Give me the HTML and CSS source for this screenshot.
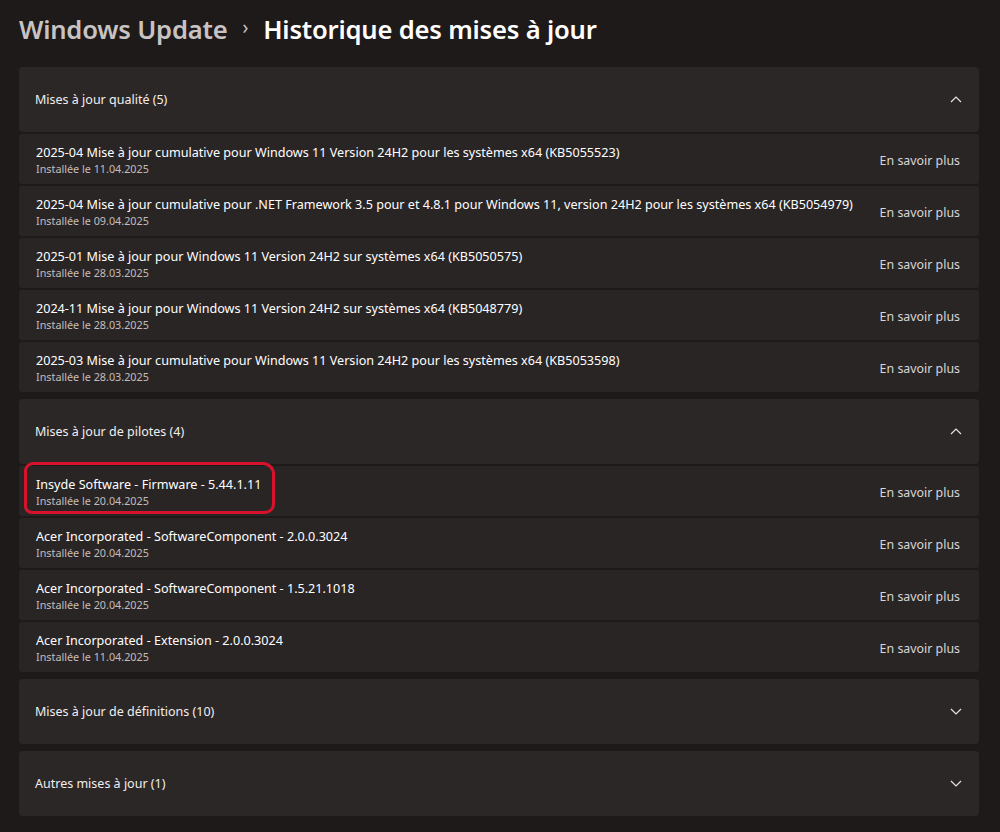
FILE: index.html
```html
<!DOCTYPE html>
<html lang="fr">
<head>
<meta charset="utf-8">
<title>Historique des mises à jour</title>
<link rel="stylesheet" href="styles.css">
</head>
<body>
<div class="page">
  <h1 class="crumbs"><span class="parent">Windows Update</span><span class="sep">›</span><span class="current">Historique des mises à jour</span></h1>

  <section class="group">
    <div class="ghead"><span>Mises à jour qualité (5)</span><svg class="chev" viewBox="0 0 12 7" width="12" height="7"><path d="M1 6 L6 1 L11 6" fill="none" stroke="#e8e4e4" stroke-width="1.2"/></svg></div>
    <div class="row"><div class="info"><div class="t">2025-04 Mise à jour cumulative pour Windows 11 Version 24H2 pour les systèmes x64 (KB5055523)</div><div class="d">Installée le 11.04.2025</div></div><a class="more">En savoir plus</a></div>
    <div class="row"><div class="info"><div class="t">2025-04 Mise à jour cumulative pour .NET Framework 3.5 pour et 4.8.1 pour Windows 11, version 24H2 pour les systèmes x64 (KB5054979)</div><div class="d">Installée le 09.04.2025</div></div><a class="more">En savoir plus</a></div>
    <div class="row"><div class="info"><div class="t">2025-01 Mise à jour pour Windows 11 Version 24H2 sur systèmes x64 (KB5050575)</div><div class="d">Installée le 28.03.2025</div></div><a class="more">En savoir plus</a></div>
    <div class="row"><div class="info"><div class="t">2024-11 Mise à jour pour Windows 11 Version 24H2 sur systèmes x64 (KB5048779)</div><div class="d">Installée le 28.03.2025</div></div><a class="more">En savoir plus</a></div>
    <div class="row"><div class="info"><div class="t">2025-03 Mise à jour cumulative pour Windows 11 Version 24H2 pour les systèmes x64 (KB5053598)</div><div class="d">Installée le 28.03.2025</div></div><a class="more">En savoir plus</a></div>
  </section>

  <section class="group">
    <div class="ghead"><span>Mises à jour de pilotes (4)</span><svg class="chev" viewBox="0 0 12 7" width="12" height="7"><path d="M1 6 L6 1 L11 6" fill="none" stroke="#e8e4e4" stroke-width="1.2"/></svg></div>
    <div class="row marked"><div class="info"><div class="t">Insyde Software - Firmware - 5.44.1.11</div><div class="d">Installée le 20.04.2025</div></div><a class="more">En savoir plus</a><span class="circle"></span></div>
    <div class="row"><div class="info"><div class="t">Acer Incorporated - SoftwareComponent - 2.0.0.3024</div><div class="d">Installée le 20.04.2025</div></div><a class="more">En savoir plus</a></div>
    <div class="row"><div class="info"><div class="t">Acer Incorporated - SoftwareComponent - 1.5.21.1018</div><div class="d">Installée le 20.04.2025</div></div><a class="more">En savoir plus</a></div>
    <div class="row"><div class="info"><div class="t">Acer Incorporated - Extension - 2.0.0.3024</div><div class="d">Installée le 11.04.2025</div></div><a class="more">En savoir plus</a></div>
  </section>

  <section class="group">
    <div class="ghead"><span>Mises à jour de définitions (10)</span><svg class="chev" viewBox="0 0 12 7" width="12" height="7"><path d="M1 1 L6 6 L11 1" fill="none" stroke="#e8e4e4" stroke-width="1.2"/></svg></div>
  </section>

  <section class="group">
    <div class="ghead"><span>Autres mises à jour (1)</span><svg class="chev" viewBox="0 0 12 7" width="12" height="7"><path d="M1 1 L6 6 L11 1" fill="none" stroke="#e8e4e4" stroke-width="1.2"/></svg></div>
  </section>
</div>
</body>
</html>
```

FILE: styles.css
```css
html, body {
  margin: 0;
  padding: 0;
  background: #1f1a1a;
  height: 100%;
}
body {
  font-family: "Noto Sans", "Open Sans", sans-serif;
  color: #ffffff;
  overflow: hidden;
}
.page {
  width: 960px;
  padding: 10px 0 0 19px;
}
.crumbs {
  margin: 0 0 19px 0;
  height: 38px;
  display: flex;
  align-items: center;
  font-size: 25.6px;
  font-weight: 600;
  letter-spacing: -0.2px;
}
.crumbs .parent { color: #c8c3c3; }
.crumbs .sep {
  color: #c8c3c3;
  font-size: 19px;
  font-weight: 400;
  margin: 0 15px 0 15px;
  position: relative;
  top: -2px;
}
.crumbs .current { color: #ffffff; }

.group {
  display: flex;
  flex-direction: column;
  gap: 2px;
  margin-bottom: 7px;
}
.ghead {
  height: 65px;
  background: #2c2727;
  border-radius: 4px;
  display: flex;
  align-items: center;
  justify-content: space-between;
  padding: 0 17px 0 16px;
  font-size: 12.5px;
  color: #f2eeee;
}
.row {
  position: relative;
  height: 50px;
  background: #2a2525;
  border-radius: 3px;
  display: flex;
  align-items: center;
  justify-content: space-between;
  padding: 0 19px 0 17px;
}
.info {
  display: flex;
  flex-direction: column;
  margin-top: 1px;
  white-space: nowrap;
}
.t {
  font-size: 12.6px;
  line-height: 18px;
  color: #ffffff;
}
.d {
  font-size: 10.8px;
  line-height: 14px;
  color: #c2bdbd;
}
.more {
  flex-shrink: 0;
  white-space: nowrap;
  font-size: 12.4px;
  color: #d9d5d5;
  margin-top: 3px;
}
.circle {
  position: absolute;
  left: 5px;
  top: -4px;
  width: 245px;
  height: 46px;
  border: 3px solid #d8112c;
  border-radius: 9px 12px 10px 8px;
}
```
